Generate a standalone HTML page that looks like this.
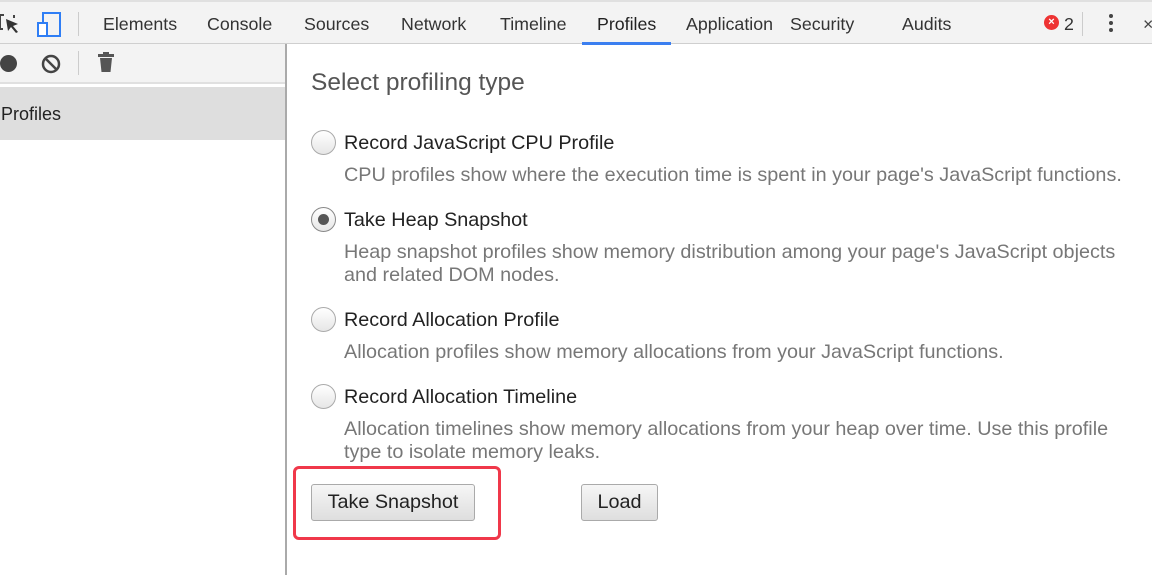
<!DOCTYPE html>
<html><head><meta charset="utf-8"><style>
*{margin:0;padding:0;box-sizing:border-box}
body{width:1152px;height:575px;overflow:hidden;background:#fff;font-family:"Liberation Sans",Arial,sans-serif;position:relative;color:#222}
.top{position:absolute;left:0;top:0;width:1152px;height:44px;background:#f3f3f3;border-top:2px solid #e0e0e0;border-bottom:1px solid #cfcfcf}
.tab{position:absolute;top:12px;font-size:17.8px;color:#333}
.sb{position:absolute;left:0;top:44px;width:287px;height:531px;background:#fff;border-right:2px solid #aaa}
.tb2{position:absolute;left:0;top:0;width:285px;height:40px;background:#f3f3f3;border-bottom:2px solid #e0e0e0}
.prow{position:absolute;left:0;top:43px;width:285px;height:53px;background:#dedede;font-size:18px;padding:17px 0 0 1px;color:#222}
.t{position:absolute;font-size:19.8px;color:#222;white-space:nowrap}
.d{position:absolute;font-size:19.8px;color:#777;line-height:23px;white-space:nowrap}
.r{position:absolute;left:311px;width:25px;height:25px;border-radius:50%;border:1px solid #aaa;background:linear-gradient(#fff,#e6e6e6)}
.btn{position:absolute;height:37px;border:1px solid #aaa;border-radius:3px;background:linear-gradient(#f6f6f6,#dedede);font-size:19.8px;color:#222;text-align:center;line-height:35px}
</style></head><body>
<div class="top">
<svg style="position:absolute;left:0;top:11px" width="22" height="22" viewBox="0 0 22 22"><path d="M0 2h4M0 2v14h3M14 2v3" stroke="#444" stroke-width="2" fill="none"/><path d="M6 6l12 5-5 2 5 6-2 1-5-6-3 4z" fill="#333"/></svg>
<svg style="position:absolute;left:37px;top:10px" width="24" height="26"><rect x="6" y="1" width="17" height="23" fill="none" stroke="#2f7ef5" stroke-width="2"/><rect x="1" y="11" width="9" height="13" fill="#fff" stroke="#2f7ef5" stroke-width="2"/></svg>
<div style="position:absolute;left:78px;top:10px;width:1px;height:24px;background:#ccc"></div>
<span class="tab" style="left:103px">Elements</span>
<span class="tab" style="left:207px">Console</span>
<span class="tab" style="left:304px">Sources</span>
<span class="tab" style="left:401px">Network</span>
<span class="tab" style="left:500px">Timeline</span>
<span class="tab" style="left:597px;color:#222">Profiles</span>
<div style="position:absolute;left:582px;top:40px;width:89px;height:3px;background:#3b7ff0"></div>
<span class="tab" style="left:686px">Application</span>
<span class="tab" style="left:790px">Security</span>
<span class="tab" style="left:902px">Audits</span>
<div style="position:absolute;left:1044px;top:13px;width:15px;height:15px;border-radius:50%;background:#e33;color:#fff;font-size:11px;font-weight:bold;text-align:center;line-height:15px">×</div>
<span class="tab" style="left:1064px">2</span>
<div style="position:absolute;left:1082px;top:10px;width:1px;height:24px;background:#ccc"></div>
<div style="position:absolute;left:1109px;top:12px;width:4px;height:4px;border-radius:50%;background:#444;box-shadow:0 7px 0 #444,0 14px 0 #444"></div>
<span class="tab" style="left:1143px;color:#444">×</span>
</div>
<div class="sb">
<div class="tb2">
<div style="position:absolute;left:0;top:11px;width:17px;height:17px;border-radius:50%;background:#444"></div>
<svg style="position:absolute;left:41px;top:10px" width="20" height="20"><circle cx="10" cy="10" r="8" fill="none" stroke="#444" stroke-width="2.5"/><path d="M4.5 4.5l11 11" stroke="#444" stroke-width="2.5"/></svg>
<div style="position:absolute;left:78px;top:7px;width:1px;height:24px;background:#ccc"></div>
<svg style="position:absolute;left:98px;top:8px" width="17" height="22"><rect x="0" y="2" width="16" height="3" fill="#555"/><rect x="5" y="0" width="6" height="3" fill="#555"/><path d="M2 6h12l-1.5 14h-9z" fill="#555"/></svg>
</div>
<div class="prow">Profiles</div>
</div>
<div class="t" style="left:311px;top:69px;font-size:24.5px;color:#555">Select profiling type</div>
<div class="r" style="top:130px"></div>
<div class="t" style="left:344px;top:132px">Record JavaScript CPU Profile</div>
<div class="d" style="left:344px;top:164px">CPU profiles show where the execution time is spent in your page's JavaScript functions.</div>
<div class="r" style="top:207px;border-color:#888"><div style="position:absolute;left:6px;top:6px;width:11px;height:11px;border-radius:50%;background:#555"></div></div>
<div class="t" style="left:344px;top:209px">Take Heap Snapshot</div>
<div class="d" style="left:344px;top:241px">Heap snapshot profiles show memory distribution among your page's JavaScript objects<br>and related DOM nodes.</div>
<div class="r" style="top:307px"></div>
<div class="t" style="left:344px;top:309px">Record Allocation Profile</div>
<div class="d" style="left:344px;top:341px">Allocation profiles show memory allocations from your JavaScript functions.</div>
<div class="r" style="top:384px"></div>
<div class="t" style="left:344px;top:386px">Record Allocation Timeline</div>
<div class="d" style="left:344px;top:418px">Allocation timelines show memory allocations from your heap over time. Use this profile<br>type to isolate memory leaks.</div>
<div style="position:absolute;left:293px;top:466px;width:208px;height:74px;border:3px solid #f0384a;border-radius:6px"></div>
<div class="btn" style="left:311px;top:484px;width:164px">Take Snapshot</div>
<div class="btn" style="left:581px;top:484px;width:77px">Load</div>
</body></html>
